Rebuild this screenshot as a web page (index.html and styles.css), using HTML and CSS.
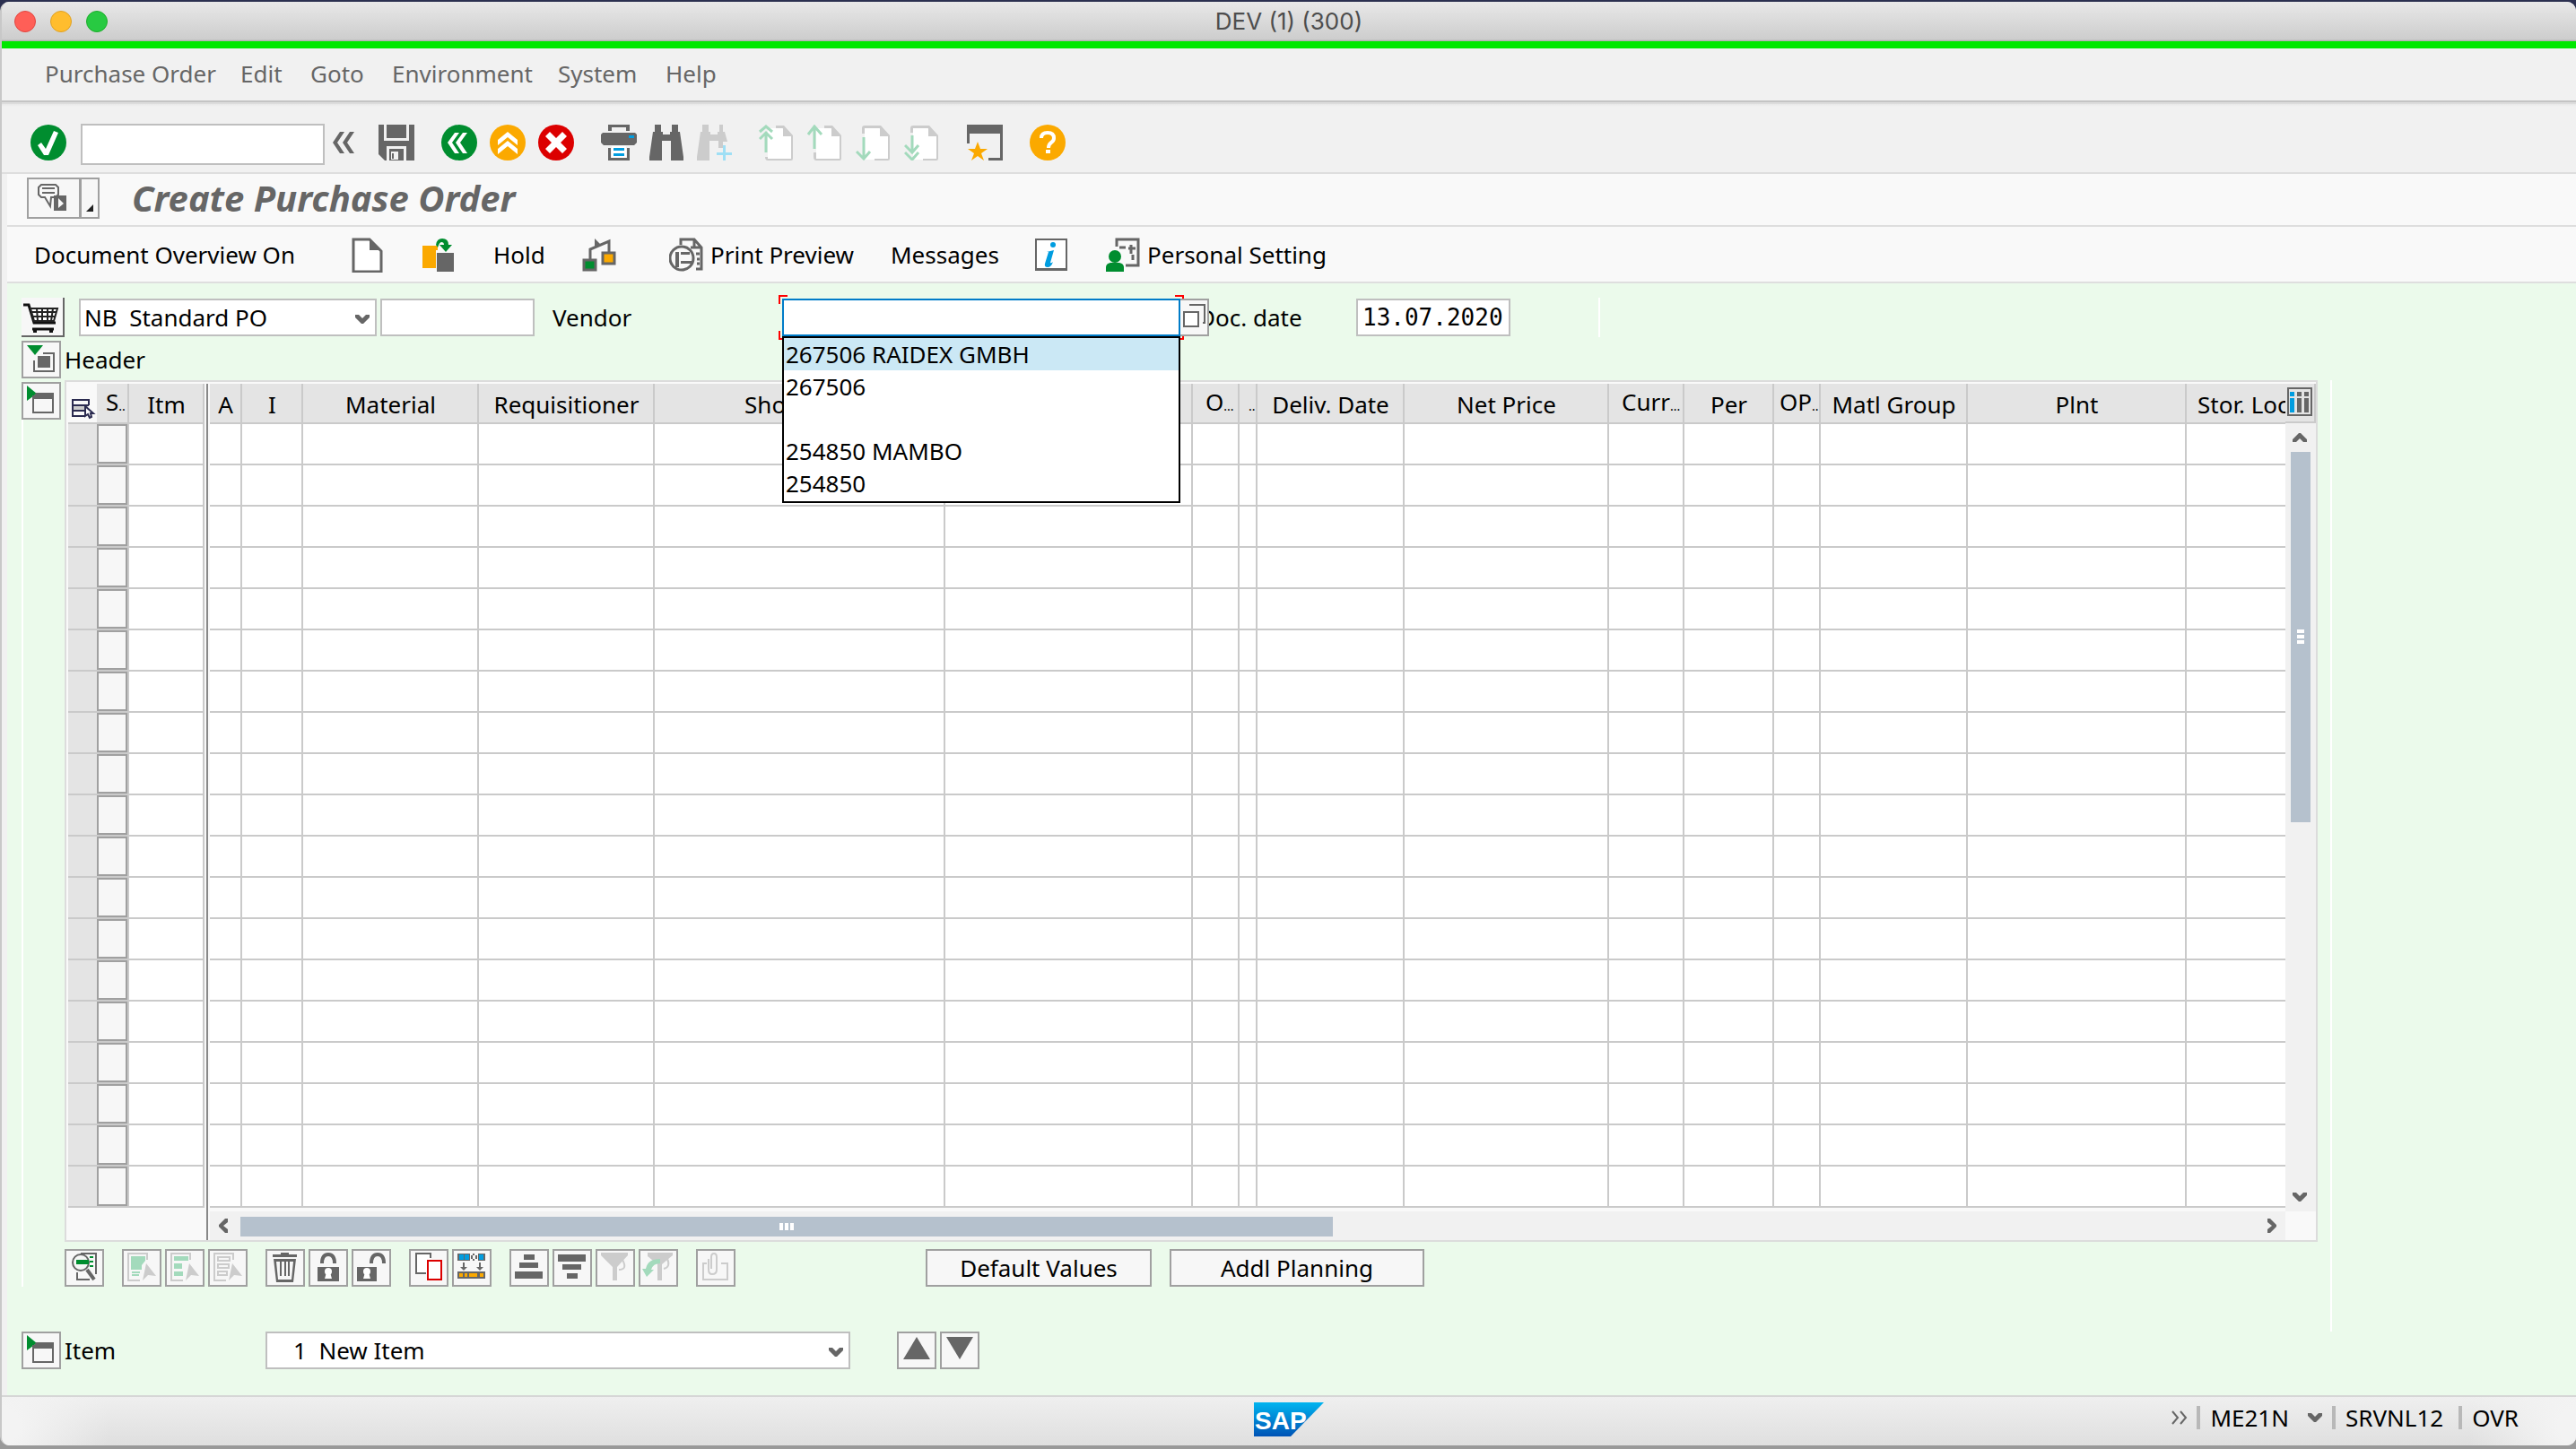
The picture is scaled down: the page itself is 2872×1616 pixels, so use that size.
FILE: index.html
```html
<!DOCTYPE html>
<html lang="en">
<head>
<meta charset="utf-8">
<title>DEV (1) (300)</title>
<link rel="stylesheet" href="styles.css">
<script src="grid.js" defer></script>
</head>
<body>
<div class="window">
  <header class="titlebar">
    <div class="lights">
      <button class="light red" aria-label="Close"></button>
      <button class="light amber" aria-label="Minimise"></button>
      <button class="light green" aria-label="Zoom"></button>
    </div>
    <h2 class="window-title">DEV (1) (300)</h2>
  </header>

  <nav class="menubar">
    <button>Purchase Order</button>
    <button>Edit</button>
    <button>Goto</button>
    <button>Environment</button>
    <button>System</button>
    <button>Help</button>
  </nav>

  <div class="toolbar">
    <button class="icon" aria-label="Enter"><svg viewBox="0 0 40 40"><circle cx="20" cy="20" r="20" fill="#008d2f"/><path d="M8 23l4-3 5 7L26 7l5 2-11 25h-5z" fill="#fff"/></svg></button>
    <input class="field command" type="text" aria-label="Command field">
    <button class="icon collapse" aria-label="Collapse"><svg viewBox="0 0 40 40"><path d="M5 20L13 8h5L10 20l8 12h-5zM16 20L24 8h5L21 20l8 12h-5z" fill="#666"/></svg></button>
    <button class="icon save" aria-label="Save"><svg viewBox="0 0 40 40"><path d="M0 0h40v40H7l-7-7z" fill="#666"/><path d="M6 0h3v15h22V0h3v18H6zM9 24h22v16h-3V27H12v13H9z" fill="#f1f1f1"/><path d="M14 30h8v9h-8z" fill="#f1f1f1"/><path d="M15 32h2v6h-2z" fill="#666"/></svg></button>
    <div class="group">
      <button class="icon" aria-label="Back"><svg viewBox="0 0 40 40"><circle cx="20" cy="20" r="20" fill="#008d2f"/><path d="M7 20L15 9h5l-8 11 8 12h-5zM16 20L24 9h5l-8 11 8 12h-5z" fill="#fff"/></svg></button>
      <button class="icon" aria-label="Exit"><svg viewBox="0 0 40 40"><circle cx="20" cy="20" r="20" fill="#fba900"/><path d="M20 8l11 9v6l-11-9-11 9v-6zM20 18l11 9v6l-11-9-11 9v-6z" fill="#fff"/></svg></button>
      <button class="icon" aria-label="Cancel"><svg viewBox="0 0 40 40"><circle cx="20" cy="20" r="20" fill="#dc0000"/><path d="M8 13l5-5 7 7 7-7 5 5-7 7 7 7-5 5-7-7-7 7-5-5 7-7z" fill="#fff"/></svg></button>
    </div>
    <div class="group find-group">
      <button class="icon" aria-label="Print"><svg viewBox="0 0 40 40"><path d="M8 0h24v7h-4V3H12v4H8zM2 9h36l2 2v9l-3 3H3l-3-3v-9zM8 26h3v11h18V26h3v14H8z" fill="#666"/><path d="M12 24h16v13H12z" fill="#fff"/><path d="M31 12h6v3h-6zM14 26h12v3H14zM14 32h12v3H14z" fill="#009de0"/></svg></button>
      <button class="icon" aria-label="Find"><svg viewBox="0 0 40 40"><path d="M7 0h7v8h2v3h8V8h2V0h7v8h2l4 28v4H25V18h-10v22H1v-4L5 8h2z" fill="#666"/></svg></button>
      <button class="icon" aria-label="Find next"><svg viewBox="0 0 40 40"><path d="M7 0h7v8h2v3h8V8h2V0h4v8h2l3 11h-5v7h-5v-8h-10v22H1v-4L5 8h2z" fill="#ccc"/><path d="M30 23h3v8h7v3h-7v6h-3v-6h-7v-3h7z" fill="#9fdff5"/></svg></button>
    </div>
    <div class="group">
      <button class="icon" aria-label="First page"><svg viewBox="0 0 40 40"><path d="M10 4h16l12 9v26H10z" fill="#fff"/><path d="M19 1h9l10 11v26q0 2-2 2H10q-3 0-3-4h3v2h26V13h-9V4h-8z" fill="#ccc"/><path d="M1 8l7-6 7 6M1 16l7-7 7 7M8 10v21" fill="none" stroke="#a3dabc" stroke-width="3"/></svg></button>
      <button class="icon" aria-label="Previous page"><svg viewBox="0 0 40 40"><path d="M10 4h16l12 9v26H10z" fill="#fff"/><path d="M19 1h9l10 11v26q0 2-2 2H10q-3 0-3-4v-5h3v7h26V13h-9V4h-8z" fill="#ccc"/><path d="M1 11l7-9 8 9M8 3v24" fill="none" stroke="#a3dabc" stroke-width="3"/></svg></button>
      <button class="icon" aria-label="Next page"><svg viewBox="0 0 40 40"><path d="M10 4h16l12 9v26H10z" fill="#fff"/><path d="M7 10V4q0-3 3-3h18l10 11v26q0 2-2 2H21v-2h15V13h-9V4H10v6z" fill="#ccc"/><path d="M1 30l8 8 7-8M9 14v23" fill="none" stroke="#a3dabc" stroke-width="3"/></svg></button>
      <button class="icon" aria-label="Last page"><svg viewBox="0 0 40 40"><path d="M10 4h16l12 9v26H10z" fill="#fff"/><path d="M7 9V4q0-3 3-3h18l10 11v26q0 2-2 2H21v-2h15V13h-9V4H10v5z" fill="#ccc"/><path d="M1 23l8 8 7-8M1 31l8 8 7-8M9 12v18" fill="none" stroke="#a3dabc" stroke-width="3"/></svg></button>
    </div>
    <button class="icon" aria-label="New session"><svg viewBox="0 0 40 40"><path d="M0 0h40v40H24v-3h13V10H3v11H0z" fill="#666"/><path d="M12 19l3 8h8l-7 5 3 8-7-5-7 5 3-8-7-5h8z" fill="#fba900"/></svg></button>
    <button class="icon" aria-label="Help"><svg viewBox="0 0 40 40"><circle cx="20" cy="20" r="20" fill="#fba900"/><path d="M13 15q0-6 7-6t7 6q0 3-3 5t-3 6" fill="none" stroke="#fff" stroke-width="4"/><path d="M18 28h5v4h-5z" fill="#fff"/></svg></button>
  </div>

  <div class="titlerow">
    <div class="split">
      <button aria-label="Services"><svg width="56" height="42" viewBox="0 0 56 42"><path d="M14 6h16l3 3v8l-3 3h-5l-1 10-6-10h-4l-3-3V9z" fill="none" stroke="#666" stroke-width="2"/><path d="M15 10h14M15 15h14" stroke="#666" stroke-width="2"/><path d="M28 18h14v17H28z" fill="#666"/><path d="M33 21v11l6-5z" fill="#f8f8f8"/></svg></button>
      <button aria-label="More services"><svg width="18" height="42" viewBox="0 0 18 42"><path d="M13 28v8H5z" fill="#222"/></svg></button>
    </div>
    <h1>Create Purchase Order</h1>
  </div>

  <div class="actions">
    <button>Document Overview On</button>
    <button aria-label="Create"><svg width="40" height="40" viewBox="0 0 40 40"><path d="M4 3h18l13 13v23H4z" fill="#fff" stroke="#666" stroke-width="3"/><path d="M22 2l13 13H22z" fill="#666"/></svg></button>
    <button aria-label="Other purchase order"><svg width="40" height="40" viewBox="0 0 40 40"><path d="M1 10h17v5h-2v20H1z" fill="#fba900"/><path d="M17 18h19v21H17z" fill="#666"/><path d="M16 9q1-7 7-7 7 0 7 7h4l-7 8-7-8h5q0-3-3-3-2 0-4 6z" fill="#008d2f"/></svg></button>
    <button>Hold</button>
    <button aria-label="Check"><svg width="40" height="40" viewBox="0 0 40 40"><path d="M10 26V14l21-9v14" fill="none" stroke="#666" stroke-width="3"/><path d="M15 2v9l7-2z" fill="#666"/><path d="M3 26h13v11H3z" fill="#008d2f" stroke="#666" stroke-width="3"/><path d="M24 18h13v12H24z" fill="#fba900" stroke="#666" stroke-width="3"/></svg></button>
    <button><svg width="40" height="40" viewBox="0 0 40 40"><path d="M13 9V3h15l8 9v24h-6M28 3v9h8M24 12h7M30 19h4M31 25h3M31 30h3" fill="none" stroke="#666" stroke-width="3"/><circle cx="14" cy="24" r="13" fill="#f8f8f8" stroke="#666" stroke-width="3"/><path d="M7 17h4v17H7zM13 17h10v3H13zM13 27h12v3H13z" fill="#666"/></svg><span>Print Preview</span></button>
    <button>Messages</button>
    <button aria-label="Information"><svg width="40" height="40" viewBox="0 0 40 40"><path d="M1 3h34v34H1z" fill="#fff" stroke="#666" stroke-width="2"/><path d="M0 35h36v3H0z" fill="#666"/><circle cx="20" cy="9" r="3" fill="#009de0"/><path d="M13 17l8-2-4 14q1 1 3-1-2 6-6 6-4 0-3-4l4-13z" fill="#009de0"/></svg></button>
    <button><svg width="40" height="40" viewBox="0 0 40 40"><path d="M12 11V3h24v29H22M15 12h7M25 13h8M28 9v10M30 20v6" fill="none" stroke="#666" stroke-width="3"/><circle cx="10" cy="22" r="7" fill="#008d2f"/><path d="M0 39v-5q0-4 5-5h10q5 1 5 5v5z" fill="#008d2f"/></svg><span>Personal Setting</span></button>
  </div>

  <main class="work">
    <div class="row doc-row">
      <button class="cart" aria-label="Shopping cart"><svg width="44" height="40" viewBox="0 0 44 40"><path d="M2 7h6l6 20h24M12 34h24" fill="none" stroke="#111" stroke-width="3"/><path d="M10 11h30l-4 14H14z" fill="#fff" stroke="#222" stroke-width="2"/><path d="M17 11l1 14M23 11v14M29 11v14M35 11l-2 14M11 15h28M12 20h26" stroke="#222" stroke-width="2"/><path d="M13 34h4v4h-4zM31 34h4v4h-4z" fill="#111"/></svg></button>
      <div class="select type-select">
        <select class="field" aria-label="Document type"><option>NB&nbsp; Standard PO</option></select>
        <svg width="16" height="10" viewBox="0 0 16 10"><path d="M0 0h4l4 4 4-4h4v3L9 10H7L0 3z" fill="#666"/></svg>
      </div>
      <input class="field number" type="text" aria-label="Document number">
      <label class="vendor-label" for="vendor">Vendor</label>
      <div class="vendor">
        <input id="vendor" class="field" type="text">
        <i class="corner tl"></i><i class="corner tr"></i><i class="corner bl"></i><i class="corner br"></i>
        <button class="match" aria-label="Search vendors"><svg width="30" height="38" viewBox="0 0 30 38"><path d="M11 6V5h16v20h-2" fill="none" stroke="#666" stroke-width="2"/><path d="M4 13h16v16H4z" fill="#fff" stroke="#666" stroke-width="2"/></svg></button>
        <ul class="history">
          <li class="on">267506 RAIDEX GMBH</li>
          <li>267506</li>
          <li></li>
          <li>254850 MAMBO</li>
          <li>254850</li>
        </ul>
      </div>
      <label class="date-label" for="date">Doc. date</label>
      <input id="date" class="field date" type="text" value="13.07.2020">
      <i class="tick"></i>
    </div>

    <div class="row section">
      <button class="box" aria-label="Open header"><svg width="40" height="38" viewBox="0 0 40 38"><path d="M4 3h18l-9 11z" fill="#008d2f"/><path d="M22 12h12v20H12V20" fill="none" stroke="#666" stroke-width="2"/><path d="M16 15h14v13H16z" fill="#666"/></svg></button>
      <span>Header</span>
    </div>

    <div class="overview">
      <div class="gutter">
        <button class="box" aria-label="Open item overview"><svg width="40" height="38" viewBox="0 0 40 38"><path d="M4 2v17l11-8z" fill="#008d2f"/><path d="M11 14h22v18H11z" fill="#f7f7f7" stroke="#666" stroke-width="2"/><path d="M14 10h20v7H10z" fill="#666"/></svg></button>
      </div>
      <div class="grid-area">
        <div class="grid">
          <div class="pane left">
            <table>
              <colgroup><col class="w32"><col class="w36"><col class="w84"></colgroup>
              <thead><tr><th class="pick" aria-label="Select"><svg width="32" height="42" viewBox="0 0 32 42"><path d="M5 17h18v19H5z" fill="#f9f9f9"/><path d="M6 23h16v6H6z" fill="#ccc"/><path d="M18 35H5V17h18v6M5 23h18M5 29h13" fill="none" stroke="#2b2b50" stroke-width="2"/><path d="M19 24v11l3-2 2 4 2-1-1-4h3z" fill="#fff" stroke="#2b2b50" stroke-width="2"/></svg></th><th class="cut snug">S<small>..</small></th><th>Itm</th></tr></thead>
              <tbody id="fixed-rows"></tbody>
            </table>
          </div>
          <div class="pane right">
            <table>
              <colgroup><col class="w36"><col class="w68"><col class="w196"><col class="w196"><col class="w324"><col class="w276"><col class="w52"><col class="w20"><col class="w164"><col class="w228"><col class="w84"><col class="w100"><col class="w52"><col class="w164"><col class="w244"><col class="w110"></colgroup>
              <thead><tr><th>A</th><th>I</th><th>Material</th><th>Requisitioner</th><th>Short Text</th><th></th><th class="cut">O<small>...</small></th><th class="cut snug"><small>..</small></th><th>Deliv. Date</th><th>Net Price</th><th class="cut">Curr<small>...</small></th><th>Per</th><th class="cut tight">OP<small>..</small></th><th>Matl Group</th><th>Plnt</th><th class="last">Stor. Location</th></tr></thead>
              <tbody id="scroll-rows"></tbody>
            </table>
            <div class="hscroll">
              <button aria-label="Scroll left"><svg width="10" height="16" viewBox="0 0 10 16"><path d="M10 0v4L5 8l5 4v4H7L0 9V7l7-7z" fill="#666"/></svg></button>
              <div class="thumb"><svg width="16" height="8" viewBox="0 0 16 8"><path d="M0 0h4v8H0zM6 0h4v8H6zM12 0h4v8h-4z" fill="#fff"/></svg></div>
              <div class="rest"></div>
              <button class="forward" aria-label="Scroll right"><svg width="10" height="16" viewBox="0 0 10 16"><path d="M0 0v4l5 4-5 4v4h3l7-7V7L3 0z" fill="#666"/></svg></button>
            </div>
          </div>
          <div class="side">
            <button class="config" aria-label="Configure columns"><svg width="28" height="32" viewBox="0 0 28 32"><path d="M1 1h26v30H1z" fill="#e4e4e4" stroke="#666" stroke-width="2"/><path d="M3 5h5v5H3zM3 12h5v16H3z" fill="#009de0"/><path d="M11 5h5v5h-5zM11 12h5v16h-5zM19 5h5v5h-5zM19 12h5v16h-5z" fill="#666"/></svg></button>
            <div class="vscroll">
              <button aria-label="Scroll up"><svg width="16" height="10" viewBox="0 0 16 10"><path d="M0 10h4l4-4 4 4h4V7L9 0H7L0 7z" fill="#666"/></svg></button>
              <div class="thumb"><svg width="8" height="16" viewBox="0 0 8 16"><path d="M0 0h8v4H0zM0 6h8v4H0zM0 12h8v4H0z" fill="#fff"/></svg></div>
              <div class="rest"></div>
              <button aria-label="Scroll down"><svg width="16" height="10" viewBox="0 0 16 10"><path d="M0 0h4l4 4 4-4h4v3L9 10H7L0 3z" fill="#666"/></svg></button>
            </div>
            <div class="blank"></div>
          </div>
        </div>

        <div class="tools">
          <div class="set">
            <button class="box" aria-label="Details"><svg width="40" height="38" viewBox="0 0 40 38"><path d="M16 3h17v23M12 24v8h14" fill="none" stroke="#666" stroke-width="2"/><path d="M26 6h4v2h-4zM26 11h4v2h-4zM26 16h4v2h-4z" fill="#008d2f"/><path d="M23 21l8 11" stroke="#666" stroke-width="4"/><circle cx="16" cy="13" r="9" fill="#f7f7f7" stroke="#666" stroke-width="2"/><path d="M11 10h14v5H11z" fill="#008d2f"/></svg></button>
          </div>
          <div class="set">
            <button class="box" aria-label="Select all" disabled><svg width="40" height="38" viewBox="0 0 40 38"><path d="M26 10V3H5v30h13" fill="none" stroke="#ccc" stroke-width="2"/><path d="M8 6h16v5l-4 5v5H8z" fill="#a3dabc"/><path d="M9 24h9M9 27h8" stroke="#a3dabc" stroke-width="2"/><path d="M25 14l11 14-9-1-6 6z" fill="#ccc"/></svg></button>
            <button class="box" aria-label="Select block" disabled><svg width="40" height="38" viewBox="0 0 40 38"><path d="M26 10V3H5v30h13" fill="none" stroke="#ccc" stroke-width="2"/><path d="M8 6h16v5H8zM8 14h9v6H8zM8 23h10v5H8z" fill="#a3dabc"/><path d="M25 14l11 14-9-1-6 6z" fill="#ccc"/></svg></button>
            <button class="box" aria-label="Deselect all" disabled><svg width="40" height="38" viewBox="0 0 40 38"><path d="M26 10V3H5v30h13M9 7h13v4H9zM9 15h12v4H9zM9 23h10v4H9z" fill="none" stroke="#ccc" stroke-width="2"/><path d="M25 14l11 14-9-1-6 6z" fill="#ccc"/></svg></button>
          </div>
          <div class="set">
            <button class="box" aria-label="Delete"><svg width="40" height="38" viewBox="0 0 40 38"><path d="M15 2h9v2h9v3H6V4h9zM7 9h25l-3 26H10zM10 12l2 20h15l2-20z" fill="#666" fill-rule="evenodd"/><path d="M15 12v16M20 12v16M24 12v16" stroke="#666" stroke-width="2"/></svg></button>
            <button class="box" aria-label="Block"><svg width="40" height="38" viewBox="0 0 40 38"><path d="M13 14q0-10 7-10t7 10" fill="none" stroke="#666" stroke-width="4"/><path d="M8 18h24v16H8z" fill="#666"/><circle cx="20" cy="23" r="4" fill="#fff"/><path d="M18 24h4l2 7h-8z" fill="#fff"/></svg></button>
            <button class="box" aria-label="Unblock"><svg width="40" height="38" viewBox="0 0 40 38"><path d="M20 14q0-10 7-10t7 10" fill="none" stroke="#666" stroke-width="4"/><path d="M4 18h22v16H4z" fill="#666"/><circle cx="15" cy="23" r="4" fill="#fff"/><path d="M13 24h4l2 7h-8z" fill="#fff"/></svg></button>
          </div>
          <div class="set">
            <button class="box" aria-label="Copy"><svg width="40" height="38" viewBox="0 0 40 38"><path d="M22 8V3H6v22h11" fill="#fff" stroke="#666" stroke-width="2"/><path d="M19 11h15v21H19z" fill="#fff" stroke="#dc0000" stroke-width="2"/></svg></button>
            <button class="box" aria-label="Fast data entry"><svg width="40" height="38" viewBox="0 0 40 38"><path d="M4 3h14v8H4zM27 3h8v8h-8zM4 23h31v8H4z" fill="#666"/><path d="M6 4h5v6H6zM12 4h5v6h-5zM28 4h5v6h-5z" fill="#009de0"/><path d="M20 5v4M22 3v2M22 9v2M25 5v4M11 13v6M29 13v6" stroke="#666" stroke-width="2"/><path d="M7 18h8l-4 4zM25 18h8l-4 4z" fill="#666"/><path d="M6 25h4v4H6zM12 25h3v4h-3zM17 25h9v4h-9zM29 25h4v4h-4z" fill="#fba900"/></svg></button>
          </div>
          <div class="set">
            <button class="box" aria-label="Sort ascending"><svg width="40" height="38" viewBox="0 0 40 38"><path d="M14 4h12v6H14zM9 13h21v6H9zM4 23h31v8H4z" fill="#666"/></svg></button>
            <button class="box" aria-label="Sort descending"><svg width="40" height="38" viewBox="0 0 40 38"><path d="M4 4h31v8H4zM9 15h21v6H9zM14 25h12v6H14z" fill="#666"/></svg></button>
            <button class="box" aria-label="Filter" disabled><svg width="40" height="38" viewBox="0 0 40 38"><path d="M4 2h30v3L22 18v15h-5V18L4 5z" fill="#ccc"/><path d="M28 10q6 11-4 11" fill="none" stroke="#ccc" stroke-width="2"/></svg></button>
            <button class="box" aria-label="Delete filter" disabled><svg width="40" height="38" viewBox="0 0 40 38"><path d="M8 2h28v3L24 15v18h-5V15L8 6z" fill="#ccc"/><path d="M30 9q4 9-4 11" fill="none" stroke="#ccc" stroke-width="2"/><path d="M22 9q-14 0-16 11H2l5 9 8-8h-3q2-7 10-7z" fill="#a3dabc"/></svg></button>
          </div>
          <div class="set">
            <button class="box" aria-label="Attachments" disabled><svg width="40" height="38" viewBox="0 0 40 38"><path d="M10 14H6v18h27V14h-7M12 9v12q0 5 4 5 5 0 5-5V7q0-4-3-4t-3 4v13" fill="none" stroke="#ccc" stroke-width="2"/></svg></button>
          </div>
          <button class="box wide default">Default Values</button>
          <button class="box wide planning">Addl Planning</button>
        </div>
      </div>
    </div>

    <div class="row item-row">
      <button class="box" aria-label="Open item detail"><svg width="40" height="38" viewBox="0 0 40 38"><path d="M4 2v17l11-8z" fill="#008d2f"/><path d="M11 14h22v18H11z" fill="#f7f7f7" stroke="#666" stroke-width="2"/><path d="M14 10h20v7H10z" fill="#666"/></svg></button>
      <label for="item">Item</label>
      <div class="select item-select">
        <select id="item" class="field"><option>1&nbsp; New Item</option></select>
        <svg width="16" height="10" viewBox="0 0 16 10"><path d="M0 0h4l4 4 4-4h4v3L9 10H7L0 3z" fill="#666"/></svg>
      </div>
      <button class="box" aria-label="Previous item"><svg width="40" height="38" viewBox="0 0 40 38"><path d="M20 4l15 25H5z" fill="#666"/></svg></button>
      <button class="box" aria-label="Next item"><svg width="40" height="38" viewBox="0 0 40 38"><path d="M5 4h30L20 29z" fill="#666"/></svg></button>
    </div>
  </main>

  <footer class="status">
    <svg class="logo" width="78" height="38" viewBox="0 0 78 38" role="img" aria-label="SAP">
      <defs><linearGradient id="sap" x1="0" y1="0" x2="0" y2="1"><stop offset="0" stop-color="#00b5f0"/><stop offset="1" stop-color="#0053b5"/></linearGradient></defs>
      <path d="M0 0h78L41 38H0z" fill="url(#sap)"/>
      <text class="logo-text" x="1" y="30">SAP</text>
    </svg>
    <div class="status-right">
      <svg class="more" width="18" height="16" viewBox="0 0 18 16"><path d="M1 1l6 7-6 7M10 1l6 7-6 7" fill="none" stroke="#666" stroke-width="2"/></svg>
      <i class="sep"></i><span class="tcode">ME21N</span>
      <svg class="drop" width="18" height="10" viewBox="0 0 18 10"><path d="M1 0h4l4 4 4-4h4v3l-7 7H8L1 3z" fill="#666"/></svg>
      <i class="sep"></i><span class="server">SRVNL12</span>
      <i class="sep"></i><span>OVR</span>
    </div>
  </footer>
</div>
</body>
</html>
```
FILE: styles.css
```css
* { box-sizing: border-box; }

body {
  margin: 0;
  padding: 2px 0 4px;
  min-height: 100vh;
  display: flex;
  background: linear-gradient(#2b3050 40px, #999 60px);
  font: 26px/36px "Noto Sans", "Open Sans", sans-serif;
  color: #000;
}

button, input, select {
  margin: 0;
  padding: 0;
  border: 0;
  border-radius: 0;
  background: none;
  font: inherit;
  color: inherit;
}

svg { display: block; flex: none; }
label, span { white-space: nowrap; }

.window {
  flex: 1;
  min-width: 0;
  display: flex;
  flex-direction: column;
  border-left: 2px solid #c8c8c8;
  border-radius: 10px;
  background: #f1f1f1;
  overflow: hidden;
}

.titlebar {
  display: grid;
  grid-template-columns: 1fr auto 1fr;
  align-items: center;
  height: 52px;
  border-bottom: 8px solid #00e800;
  background: linear-gradient(#e8e8e8, #cdcdcd 42px, #a8a8a8 44px);
}
.lights { display: flex; gap: 16px; padding-left: 14px; }
.light { width: 24px; height: 24px; border-radius: 50%; }
.light.red { background: #ff5f57; border: 1px solid #e14640; }
.light.amber { background: #ffbd2e; border: 1px solid #dfa123; }
.light.green { background: #28ca42; border: 1px solid #1dad2b; }
.window-title { margin: 0; font: 26px/36px Inter, sans-serif; color: #4d4d4d; }

.menubar {
  display: grid;
  grid-template-columns: 218px 78px 91px 185px 120px auto;
  align-items: center;
  height: 60px;
  padding: 0 0 2px 48px;
  border-bottom: 2px solid #c4c4c4;
  color: #666;
}
.menubar button { text-align: left; white-space: nowrap; }

.toolbar {
  display: flex;
  align-items: center;
  gap: 30px;
  height: 80px;
  padding: 12px 0 0 32px;
  border-bottom: 2px solid #dedede;
  background: linear-gradient(#dcdcdc 2px, #e8e8e8 2px, #f1f1f1 5px);
}
.icon { width: 40px; height: 40px; }
.icon svg { width: 40px; height: 40px; }
.group { display: flex; gap: 14px; }
.find-group { gap: 13px; }
.command { width: 272px; height: 46px; margin: 4px 0 0 -14px; }
.collapse { margin-left: -26px; }
.save { margin-left: -14px; }

.field {
  border: 2px solid #bfbfbf;
  background: #fff;
}

.titlerow, .actions, .work { margin-left: 6px; }

.titlerow {
  display: flex;
  align-items: center;
  gap: 36px;
  height: 59px;
  padding: 0 0 4px 22px;
  border-bottom: 2px solid #dedede;
  background: #f9f9f9;
}
.split { display: flex; border: 2px solid #a0a0a0; background: #f7f7f7; }
.split button + button { border-left: 3px solid #a0a0a0; }
h1 {
  margin: 0;
  font-size: 40px;
  line-height: 44px;
  font-style: italic;
  font-weight: 700;
  color: #666;
  white-space: nowrap;
}

.actions {
  display: grid;
  grid-template-columns: 352px 80px 80px 98px 98px 247px 161px 79px auto;
  align-items: center;
  height: 63px;
  padding-left: 30px;
  border-bottom: 2px solid #dedede;
  background: #f9f9f9;
}
.actions button {
  display: flex;
  align-items: center;
  gap: 6px;
  white-space: nowrap;
}

.work {
  flex: 1;
  padding: 16px 0 0 16px;
  background: #ebfaeb;
}
.row { display: flex; align-items: center; }

.doc-row { height: 44px; margin-bottom: 4px; }
.doc-row .field { height: 42px; }
.cart {
  width: 48px;
  height: 44px;
  margin-right: 16px;
  border: solid #666;
  border-width: 0 2px 2px 0;
  background: #f7f7f7;
}
.select { position: relative; }
.select select {
  display: block;
  width: 100%;
  height: 42px;
  padding-left: 4px;
  appearance: none;
}
.select svg { position: absolute; right: 8px; top: 18px; pointer-events: none; }
.type-select { width: 332px; }
.number { width: 172px; margin: 0 20px 0 4px; }
.vendor-label { width: 256px; }

.vendor { position: relative; width: 444px; height: 42px; }
.vendor .field { width: 100%; border-color: #007cc8; }
.corner {
  position: absolute;
  width: 10px;
  height: 10px;
  border: 0 solid #f00;
}
.tl { top: -4px; left: -4px; border-width: 2px 0 0 2px; }
.tr { top: -4px; right: -4px; border-width: 2px 2px 0 0; }
.bl { bottom: -4px; left: -4px; border-width: 0 0 2px 2px; }
.br { bottom: -4px; right: -4px; border-width: 0 2px 2px 0; }
.match {
  position: absolute;
  left: 100%;
  top: 0;
  width: 32px;
  height: 42px;
  border: 2px solid #a0a0a0;
  border-left: 0;
  background: #f7f7f7;
}
.history {
  position: absolute;
  z-index: 2;
  left: 0;
  top: 42px;
  width: 100%;
  margin: 0;
  padding: 0 0 2px;
  border: 2px solid #000;
  background: #fff;
  list-style: none;
}
.history li { height: 36px; padding-left: 2px; white-space: nowrap; }
.history .on { background: #cbe8f5; }

.date-label { width: 176px; margin-left: 20px; }
.date {
  width: 172px;
  padding-left: 5px;
  font-family: "DejaVu Sans Mono", monospace;
}
.tick { width: 2px; height: 44px; margin-left: 98px; background: #fff; }

.box {
  flex: none;
  width: 44px;
  height: 42px;
  border: 2px solid #a0a0a0;
  background: #f7f7f7;
}
.section { gap: 4px; height: 42px; margin-bottom: 2px; }

.overview {
  display: flex;
  width: fit-content;
  max-width: 100%;
  padding: 0 14px 50px 0;
  border-right: 2px solid #fff;
}
.gutter { display: flex; flex-direction: column; flex: none; width: 48px; padding-top: 2px; }
.gutter::after { content: ""; flex: 1; width: 2px; background: #fff; }
.grid-area { min-width: 0; }

.grid {
  display: flex;
  border: 2px solid #dcdcdc;
  padding: 2px 0 0 2px;
  background: #f9f9f9;
}
.pane { overflow: hidden; }
.pane.left { flex: none; padding-right: 2px; border-right: 2px solid #888; }
.pane.right { min-width: 0; padding-left: 2px; }

table { table-layout: fixed; border-collapse: separate; border-spacing: 0; background: #fff; }
.pane.left table { width: 152px; }
.pane.right table { width: 2314px; }
th, td {
  padding: 0;
  border: solid #cacaca;
  border-width: 0 2px 2px 0;
  overflow: hidden;
  white-space: nowrap;
}
th {
  height: 44px;
  padding: 2px 0 0 1px;
  background: #e4e4e4;
  font-weight: 400;
  line-height: 36px;
}
td { height: 46px; }
th small { font-size: 14px; }
th.cut { padding-left: 14px; text-align: left; }
th.snug { padding-left: 10px; }
th.tight { padding-left: 6px; }
th.last { padding-left: 12px; text-align: left; }
.pane.right th:last-child, .pane.right td:last-child { border-right: 0; }
th.pick { padding: 0; border-right: 0; background: #f9f9f9; }
td.handle { border-right: 0; background: #e4e4e4; }
.mark { display: block; width: 34px; height: 44px; border: 2px solid #a0a0a0; background: #f7f7f7; }

.w20 { width: 20px; }
.w32 { width: 32px; }
.w36 { width: 36px; }
.w52 { width: 52px; }
.w68 { width: 68px; }
.w84 { width: 84px; }
.w100 { width: 100px; }
.w110 { width: 110px; }
.w164 { width: 164px; }
.w196 { width: 196px; }
.w228 { width: 228px; }
.w244 { width: 244px; }
.w276 { width: 276px; }
.w324 { width: 324px; }

.thumb { display: grid; place-items: center; background: #b5c1cd; }
.hscroll { display: flex; height: 32px; margin-top: 4px; background: #f1f1f1; }
.hscroll button { flex: none; width: 34px; padding-left: 10px; }
.hscroll .forward { padding-left: 14px; }
.hscroll .thumb { flex: 1218; margin: 6px 0 4px; }
.hscroll .rest { flex: 1028; }

.side { display: flex; flex-direction: column; flex: none; width: 34px; }
.config {
  flex: none;
  height: 44px;
  padding: 4px 2px 6px;
  border: solid #cacaca;
  border-width: 0 2px 2px 0;
  background: #e4e4e4;
}
.vscroll { display: flex; flex-direction: column; flex: 1; background: #f1f1f1; }
.vscroll button { flex: none; height: 32px; padding: 0 8px; }
.vscroll .thumb { flex: 412; margin: 0 6px; }
.vscroll .rest { flex: 402; }
.blank { height: 32px; }

.tools { display: flex; align-items: center; gap: 20px; margin-top: 8px; height: 42px; }
.set { display: flex; gap: 4px; }
.wide { width: 252px; white-space: nowrap; }
.default { margin-left: 192px; }
.planning { width: 284px; }

.item-row { height: 42px; }
.item-row label { width: 224px; margin-left: 4px; }
.item-select { width: 652px; margin-right: 52px; }
.item-select select { padding-left: 29px; }
.item-row .box + .box { margin-left: 4px; }

.status {
  display: grid;
  grid-template-columns: 1fr auto 1fr;
  align-items: center;
  height: 56px;
  border-top: 2px solid #d6d6d6;
  background:
    radial-gradient(circle at 0 60%, #f3f3f3 20px, transparent 120px),
    radial-gradient(circle at 100% 60%, #f3f3f3 20px, transparent 120px),
    linear-gradient(#efefef, #dfdfdf);
}
.logo { grid-column: 2; margin-bottom: 4px; }
.logo-text { font: bold 28px "Liberation Sans", Arial, sans-serif; fill: #fff; }
.status-right {
  display: flex;
  align-items: center;
  justify-content: flex-end;
  padding: 0 64px 8px 0;
}
.sep { flex: none; width: 4px; height: 26px; margin: 0 11px 0 10px; background: #b8b8b8; }
.tcode { margin-right: 20px; }
.server { margin-right: 7px; }
```
FILE: grid.js
```js
// Fill the item overview with empty rows, in the fixed and the scrolling pane alike.
const ROWS = 19;
const SCROLL_COLUMNS = 16;

const fixed = document.getElementById("fixed-rows");
const scrolling = document.getElementById("scroll-rows");

for (let i = 0; i < ROWS; i++) {
  fixed.insertAdjacentHTML(
    "beforeend",
    '<tr><td class="handle"></td><td><span class="mark"></span></td><td></td></tr>'
  );
  scrolling.insertAdjacentHTML("beforeend", "<tr>" + "<td></td>".repeat(SCROLL_COLUMNS) + "</tr>");
}
```
